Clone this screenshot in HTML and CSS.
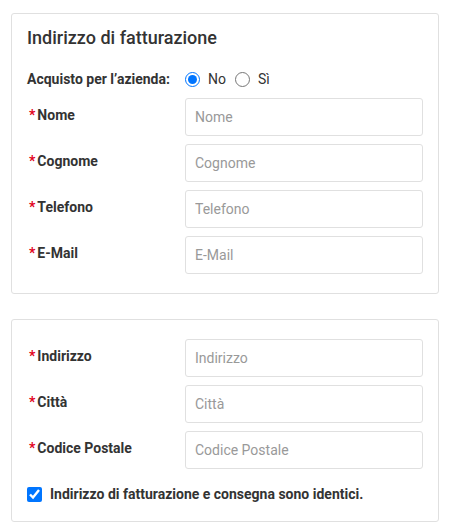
FILE: index.html
```html
<!DOCTYPE html>
<html lang="it">
<head>
<meta charset="utf-8">
<link rel="stylesheet" href="styles.css">
</head>
<body>
<div class="page">
  <section class="card card-billing">
    <h2 class="card-title">Indirizzo di fatturazione</h2>
    <div class="radio-row">
      <span class="field-label">Acquisto per l’azienda:</span>
      <label class="radio-opt"><input type="radio" name="az" checked> No</label>
      <label class="radio-opt"><input type="radio" name="az"> Sì</label>
    </div>
    <div class="rows">
      <div class="row"><label class="field-label"><span class="req">*</span>Nome</label><input class="field" placeholder="Nome"></div>
      <div class="row"><label class="field-label"><span class="req">*</span>Cognome</label><input class="field" placeholder="Cognome"></div>
      <div class="row"><label class="field-label"><span class="req">*</span>Telefono</label><input class="field" placeholder="Telefono"></div>
      <div class="row"><label class="field-label"><span class="req">*</span>E-Mail</label><input class="field" placeholder="E-Mail"></div>
    </div>
  </section>
  <section class="card card-address">
    <div class="rows">
      <div class="row"><label class="field-label"><span class="req">*</span>Indirizzo</label><input class="field" placeholder="Indirizzo"></div>
      <div class="row"><label class="field-label"><span class="req">*</span>Città</label><input class="field" placeholder="Città"></div>
      <div class="row"><label class="field-label"><span class="req">*</span>Codice Postale</label><input class="field" placeholder="Codice Postale"></div>
    </div>
    <label class="check-row"><input type="checkbox" checked> Indirizzo di fatturazione e consegna sono identici.</label>
  </section>
</div>
</body>
</html>
```
FILE: styles.css
```css
* { box-sizing: border-box; }
html, body { margin: 0; padding: 0; background: #fff; }
body {
  font-family: Roboto, "Noto Sans", "Liberation Sans", sans-serif;
  font-size: 14px;
  color: #333;
}
.page {
  padding: 13px 13px 0 11px;
  display: flex;
  flex-direction: column;
  gap: 25px;
}
.card {
  border: 1px solid #e0e0e0;
  border-radius: 3px;
  padding: 14px 15px 19px 15px;
}
.card-address { padding: 19px 15px 18px 15px; }
.card-title {
  margin: 0 0 21px 0;
  font-size: 18px;
  line-height: 20px;
  font-weight: 500;
  color: #333;
}
.field-label {
  font-weight: 700;
  font-size: 14px;
  line-height: 20px;
  color: #333;
}
.radio-row {
  display: flex;
  align-items: center;
  height: 20px;
  margin-bottom: 9px;
}
.radio-row .field-label { width: 158px; }
.radio-opt {
  display: flex;
  align-items: center;
  font-size: 14px;
  color: #333;
  margin-right: 9px;
}
.radio-opt input {
  width: 15px;
  height: 15px;
  margin: 0 8px 0 0;
}
.rows {
  display: flex;
  flex-direction: column;
  gap: 8px;
}
.row {
  display: flex;
  align-items: flex-start;
}
.row .field-label {
  width: 158px;
  padding-top: 7px;
  padding-left: 2px;
}
.req {
  color: #e2001a;
  margin-right: 2px;
}
.field {
  flex: 1;
  height: 38px;
  border: 1px solid #e0e0e0;
  border-radius: 3px;
  padding: 0 9px;
  font-family: inherit;
  font-size: 14px;
  color: #333;
  outline: none;
}
.field::placeholder { color: #999; }
.check-row {
  display: flex;
  align-items: center;
  margin-top: 16px;
  font-weight: 700;
  line-height: 18px;
}
.check-row input {
  width: 15px;
  height: 15px;
  margin: 0 8px 0 0;
}
```
